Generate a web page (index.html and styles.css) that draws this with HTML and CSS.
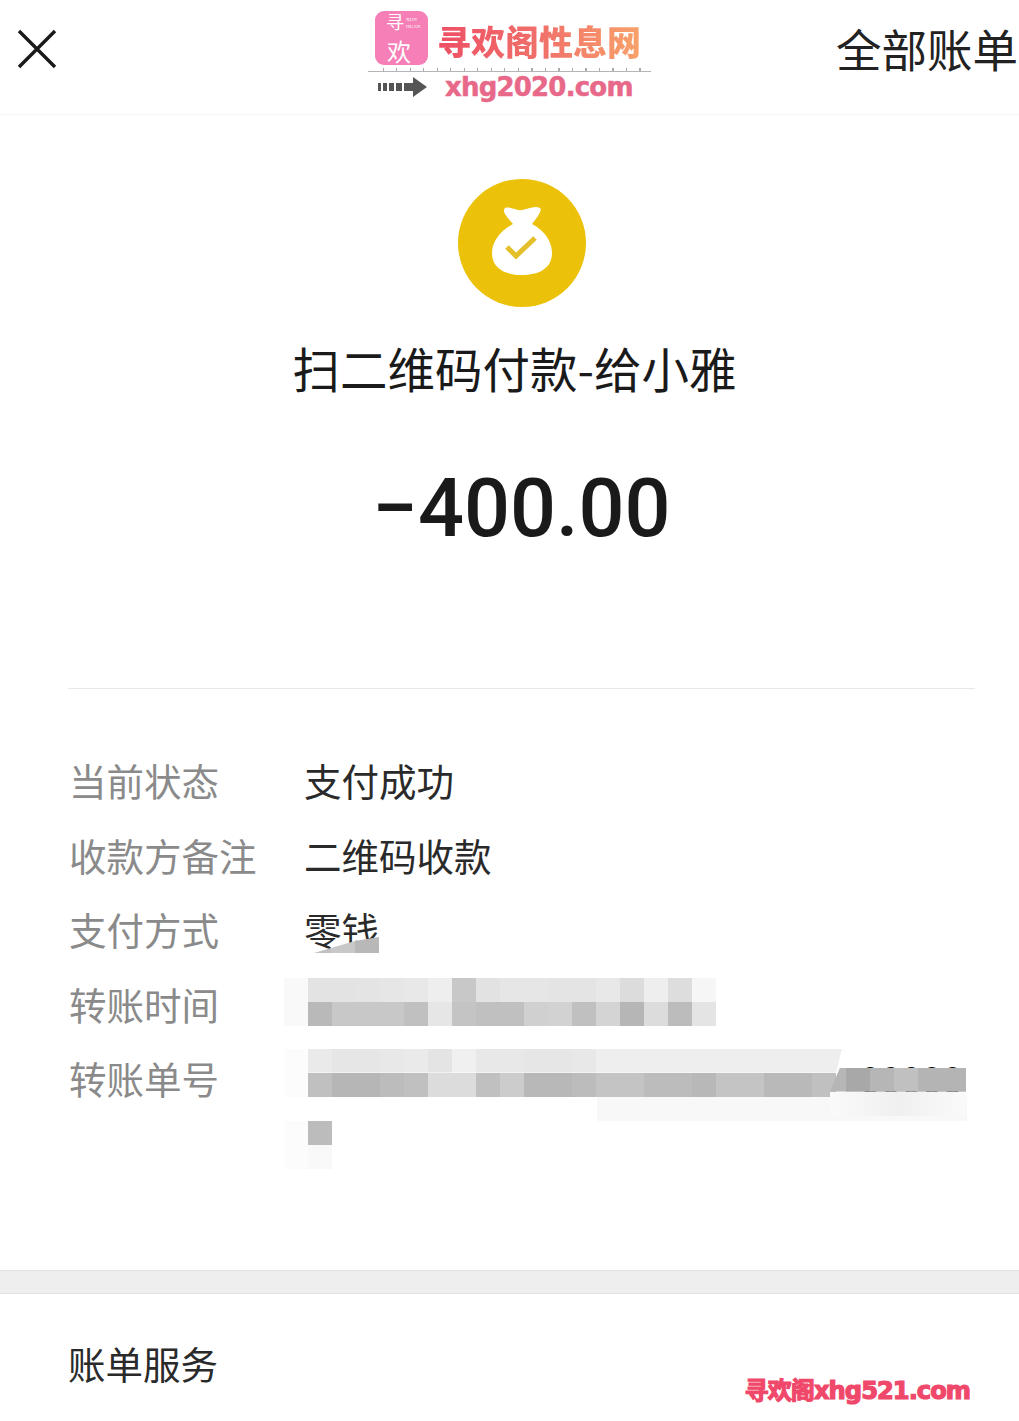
FILE: index.html
```html
<!DOCTYPE html>
<html lang="zh-CN">
<head>
    <meta charset="UTF-8">
    <title>账单详情</title>
    <link rel="stylesheet" href="styles.css">
</head>
<body>
    <div class="page">
        <div class="header-bar">
            <svg class="close-icon" width="40" height="40" viewBox="0 0 40 40">
                <path d="M2 2 L38 38 M38 2 L2 38" fill="none" stroke="#1a1a1a" stroke-width="3.4"/>
            </svg>
            <span class="all-bills">全部账单</span>
        </div>

        <div class="site-mark">
            <div class="mark-top">
                <div class="mark-tile">
                    <span class="tile-xun">寻</span>
                    <span class="tile-huan">欢</span>
                    <span class="tile-small">XUN<br>HUAN</span>
                </div>
                <span class="mark-name">寻欢阁性息网</span>
            </div>
            <div class="mark-ruler"></div>
            <div class="mark-bottom">
                <svg width="50" height="22" viewBox="0 0 50 22">
                    <path d="M0 7h3v8H0z M5 7h4v8H5z M11 7h5v8h-5z M18 7h6v8h-6z M26 7h9V1l14 10-14 10v-6h-9z" fill="#555"/>
                </svg>
                <span class="mark-url">xhg2020.com</span>
            </div>
        </div>

        <div class="summary">
            <svg class="status-icon" width="128" height="128" viewBox="0 0 128 128">
                <circle cx="64" cy="64" r="64" fill="#ecc10a"/>
                <path d="M47 29 C52 27 58 32 64 31 C70 30 77 26 82 29 C85 31 78 40 74 45 C86 51 94 62 94 74 C94 90 80 96 64 96 C48 96 34 90 34 74 C34 62 43 51 55 45 C51 40 43 33 47 29Z" fill="#fff"/>
                <path d="M49 68 L58 77 L77 59" fill="none" stroke="#e3bf2a" stroke-width="5"/>
            </svg>
            <div class="title">扫二维码付款-给小雅</div>
            <div class="amount">−400.00</div>
        </div>

        <div class="details">
            <div class="row">
                <span class="label">当前状态</span>
                <span class="value">支付成功</span>
            </div>
            <div class="row">
                <span class="label">收款方备注</span>
                <span class="value">二维码收款</span>
            </div>
            <div class="row">
                <span class="label">支付方式</span>
                <span class="value">零钱
                    <span class="wedge"><i class="c0 w-first"></i><i class="c8"></i><i class="b8"></i></span>
                </span>
            </div>
            <div class="row">
                <span class="label">转账时间</span>
                <div class="mosaic mosaic-time">
                    <div class="cells">
                        <i class="f9"></i><i class="e3"></i><i class="e3"></i><i class="e4"></i><i class="e6"></i><i class="e8"></i><i class="ee"></i><i class="c8"></i><i class="e2"></i><i class="e6"></i><i class="e6"></i><i class="e4"></i><i class="e4"></i><i class="e8"></i><i class="dc"></i><i class="ee"></i><i class="dd"></i><i class="f6"></i>
                    </div>
                    <div class="cells">
                        <i class="f9"></i><i class="b9"></i><i class="c8"></i><i class="c8"></i><i class="c8"></i><i class="c0"></i><i class="e6"></i><i class="c4"></i><i class="c0"></i><i class="c0"></i><i class="d0"></i><i class="d2"></i><i class="c0"></i><i class="d4"></i><i class="b6"></i><i class="dc"></i><i class="bc"></i><i class="e4"></i>
                    </div>
                </div>
            </div>
            <div class="row">
                <span class="label">转账单号</span>
                <div class="mosaic mosaic-order">
                    <div class="cells cells-slant">
                        <i class="fc"></i><i class="ea"></i><i class="e6"></i><i class="e6"></i><i class="e8"></i><i class="ea"></i><i class="e4"></i><i class="f0"></i><i class="e8"></i><i class="e8"></i><i class="e6"></i><i class="e6"></i><i class="e8"></i><i class="ee"></i><i class="ee"></i><i class="ee"></i><i class="ee"></i><i class="ee"></i><i class="ee"></i><i class="ee"></i><i class="ee"></i><i class="ee"></i><i class="ee"></i><i class="ee"></i>
                    </div>
                    <div class="cells">
                        <i class="fc"></i><i class="c0"></i><i class="b6"></i><i class="b6"></i><i class="bc"></i><i class="c0"></i><i class="dc"></i><i class="dc"></i><i class="c0"></i><i class="cc"></i><i class="b8"></i><i class="b8"></i><i class="bc"></i><i class="c4"></i><i class="c4"></i><i class="bc"></i><i class="bc"></i><i class="b8"></i><i class="c4"></i><i class="c4"></i><i class="b9"></i><i class="b9"></i><i class="c0"></i>
                    </div>
                    <div class="cells cells-fade"></div>
                    <div class="cells">
                        <i class="fc"></i><i class="bc"></i>
                    </div>
                    <div class="cells">
                        <i class="fc"></i><i class="f9"></i>
                    </div>
                    <span class="order-tail-text">00000</span>
                    <span class="order-tail">
                        <i class="a8"></i><i class="b6"></i><i class="c0"></i><i class="b4"></i><i class="b4"></i>
                    </span>
                    <span class="order-tail-shadow"></span>
                </div>
            </div>
        </div>

        <div class="band"></div>

        <div class="services">账单服务</div>

        <div class="foot-mark">寻欢阁xhg521.com</div>
    </div>
</body>
</html>
```

FILE: styles.css
```css
body {
    margin: 0;
    background: #fff;
    font-family: "Noto Sans CJK SC", "Noto Sans", sans-serif;
    color: #222;
}
.page {
    position: relative;
    height: 1421px;
    overflow: hidden;
}
.header-bar {
    height: 114px;
    display: flex;
    align-items: flex-start;
    justify-content: space-between;
    padding: 0 1px 0 17px;
    border-bottom: 1px solid #f6f6f6;
}
.close-icon {
    margin-top: 29px;
}
.all-bills {
    font-size: 45.5px;
    line-height: 97px;
    color: #222;
}

/* site logo laid over the header */
.site-mark {
    position: absolute;
    top: 11px;
    left: 368px;
    width: 283px;
}
.mark-top {
    display: flex;
    align-items: center;
    padding-left: 7px;
    gap: 9px;
}
.mark-tile {
    position: relative;
    width: 53px;
    height: 54px;
    border-radius: 9px;
    background: #f57fb6;
    color: #fff;
}
.tile-xun {
    position: absolute;
    left: 11px;
    top: 1px;
    font-size: 18px;
    line-height: 18px;
}
.tile-huan {
    position: absolute;
    left: 12px;
    top: 28px;
    font-size: 24px;
    line-height: 24px;
}
.tile-small {
    position: absolute;
    left: 31px;
    top: 5px;
    font-family: "Liberation Serif", serif;
    font-size: 5px;
    line-height: 7px;
}
.mark-name {
    margin-top: 6px;
    font-size: 34px;
    font-weight: 900;
    line-height: 48px;
    white-space: nowrap;
    background: linear-gradient(90deg, #ee4f64, #f0706a 50%, #f9a26a);
    -webkit-background-clip: text;
    background-clip: text;
    color: transparent;
}
.mark-ruler {
    height: 7px;
    box-sizing: border-box;
    border-bottom: 1px solid #b4b4b4;
    background: repeating-linear-gradient(90deg, #aaa 0 1px, transparent 1px 13.5px) left 15px top 3px / 100% 3px no-repeat;
}
.mark-bottom {
    display: flex;
    align-items: center;
    height: 30px;
    padding-left: 10px;
    gap: 17px;
}
.mark-url {
    font-family: "DejaVu Sans", sans-serif;
    font-size: 26px;
    font-weight: 700;
    letter-spacing: -0.8px;
    color: #e8688a;
    -webkit-text-stroke: 0.5px #e8688a;
}

.summary {
    display: flex;
    flex-direction: column;
    align-items: center;
    padding: 64px 0 129px;
    margin: 0 44px 0 68px;
}
.status-icon {
    display: block;
}
.title {
    margin: 31px 14px 0 0;
    font-size: 47.5px;
    line-height: 60px;
    color: #1a1a1a;
    white-space: nowrap;
}
.amount {
    margin-top: 61px;
    font-family: Roboto, sans-serif;
    font-size: 81px;
    font-weight: 500;
    line-height: 100px;
    color: #1a1a1a;
}

.details {
    margin: 0 44px 0 68px;
    padding-top: 54px;
    border-top: 1px solid #e8e8e8;
}
.row {
    display: flex;
    align-items: flex-start;
    min-height: 74.5px;
    font-size: 37.5px;
    line-height: 74.5px;
}
.label {
    flex: none;
    width: 236px;
    padding-left: 1px;
    box-sizing: border-box;
    color: #8a8a8a;
}
.value {
    position: relative;
    color: #2a2a2a;
}

/* pixelated blocks hiding private values */
.mosaic {
    position: relative;
    margin-left: -20px;
}
.mosaic-time {
    margin-top: 11.5px;
}
.mosaic-order {
    margin-top: 7.5px;
}
.cells {
    display: flex;
    height: 24px;
}
.cells i, .wedge i, .order-tail i {
    display: block;
    flex: none;
    width: 24px;
    height: 24px;
}
.cells-slant {
    width: 558px;
    clip-path: polygon(0 0, 100% 0, calc(100% - 6px) 100%, 0 100%);
}
.cells-fade {
    width: 370px;
    margin-left: 313px;
    background: #f8f8f8;
}
.wedge {
    position: absolute;
    left: 10px;
    top: 45px;
    display: flex;
    width: 65px;
    height: 16px;
    clip-path: polygon(0 16px, 17px 11px, 41px 4px, 65px 0, 65px 16px);
}
.wedge i {
    height: 16px;
}
.wedge .w-first {
    width: 17px;
}
.order-tail-text {
    position: absolute;
    left: 576px;
    top: 0;
    color: #111;
    font-size: 37px;
    line-height: 58px;
    white-space: nowrap;
}
.order-tail {
    position: absolute;
    left: 546px;
    top: 19px;
    display: flex;
    width: 136px;
    height: 24px;
    padding-left: 16px;
    box-sizing: border-box;
    background: #b6b6b6;
    clip-path: polygon(10px 0, 100% 0, 100% 100%, 0 100%);
}
.order-tail-shadow {
    position: absolute;
    left: 546px;
    top: 43px;
    width: 136px;
    height: 24px;
    background: linear-gradient(90deg, #fafafa, #f0f0f0 50%, #fafafa);
}

.a8 { background: #a8a8a8; }
.b4 { background: #b4b4b4; }
.b6 { background: #b6b6b6; }
.b8 { background: #b8b8b8; }
.b9 { background: #b9b9b9; }
.bc { background: #bcbcbc; }
.c0 { background: #c0c0c0; }
.c4 { background: #c4c4c4; }
.c8 { background: #c8c8c8; }
.cc { background: #cccccc; }
.d0 { background: #d0d0d0; }
.d2 { background: #d2d2d2; }
.d4 { background: #d4d4d4; }
.dc { background: #dcdcdc; }
.dd { background: #dddddd; }
.e2 { background: #e2e2e2; }
.e3 { background: #e3e3e3; }
.e4 { background: #e4e4e4; }
.e6 { background: #e6e6e6; }
.e8 { background: #e8e8e8; }
.ea { background: #eaeaea; }
.ee { background: #eeeeee; }
.f0 { background: #f0f0f0; }
.f6 { background: #f6f6f6; }
.f9 { background: #f9f9f9; }
.fc { background: #fcfcfc; }

.band {
    height: 22px;
    margin-top: 101px;
    background: #eeeeee;
    border-top: 1px solid #e2e2e2;
    border-bottom: 1px solid #e2e2e2;
}
.services {
    padding: 44px 0 0 68px;
    font-size: 37.5px;
    line-height: 50px;
    color: #2a2a2a;
}

/* red watermark in the corner */
.foot-mark {
    position: absolute;
    top: 1373px;
    right: 49px;
    font-family: "DejaVu Sans", "Noto Sans CJK SC", sans-serif;
    font-size: 24.2px;
    font-weight: 700;
    line-height: 36px;
    letter-spacing: -1px;
    color: #f0486a;
    -webkit-text-stroke: 1.2px #f0486a;
    white-space: nowrap;
}
```
